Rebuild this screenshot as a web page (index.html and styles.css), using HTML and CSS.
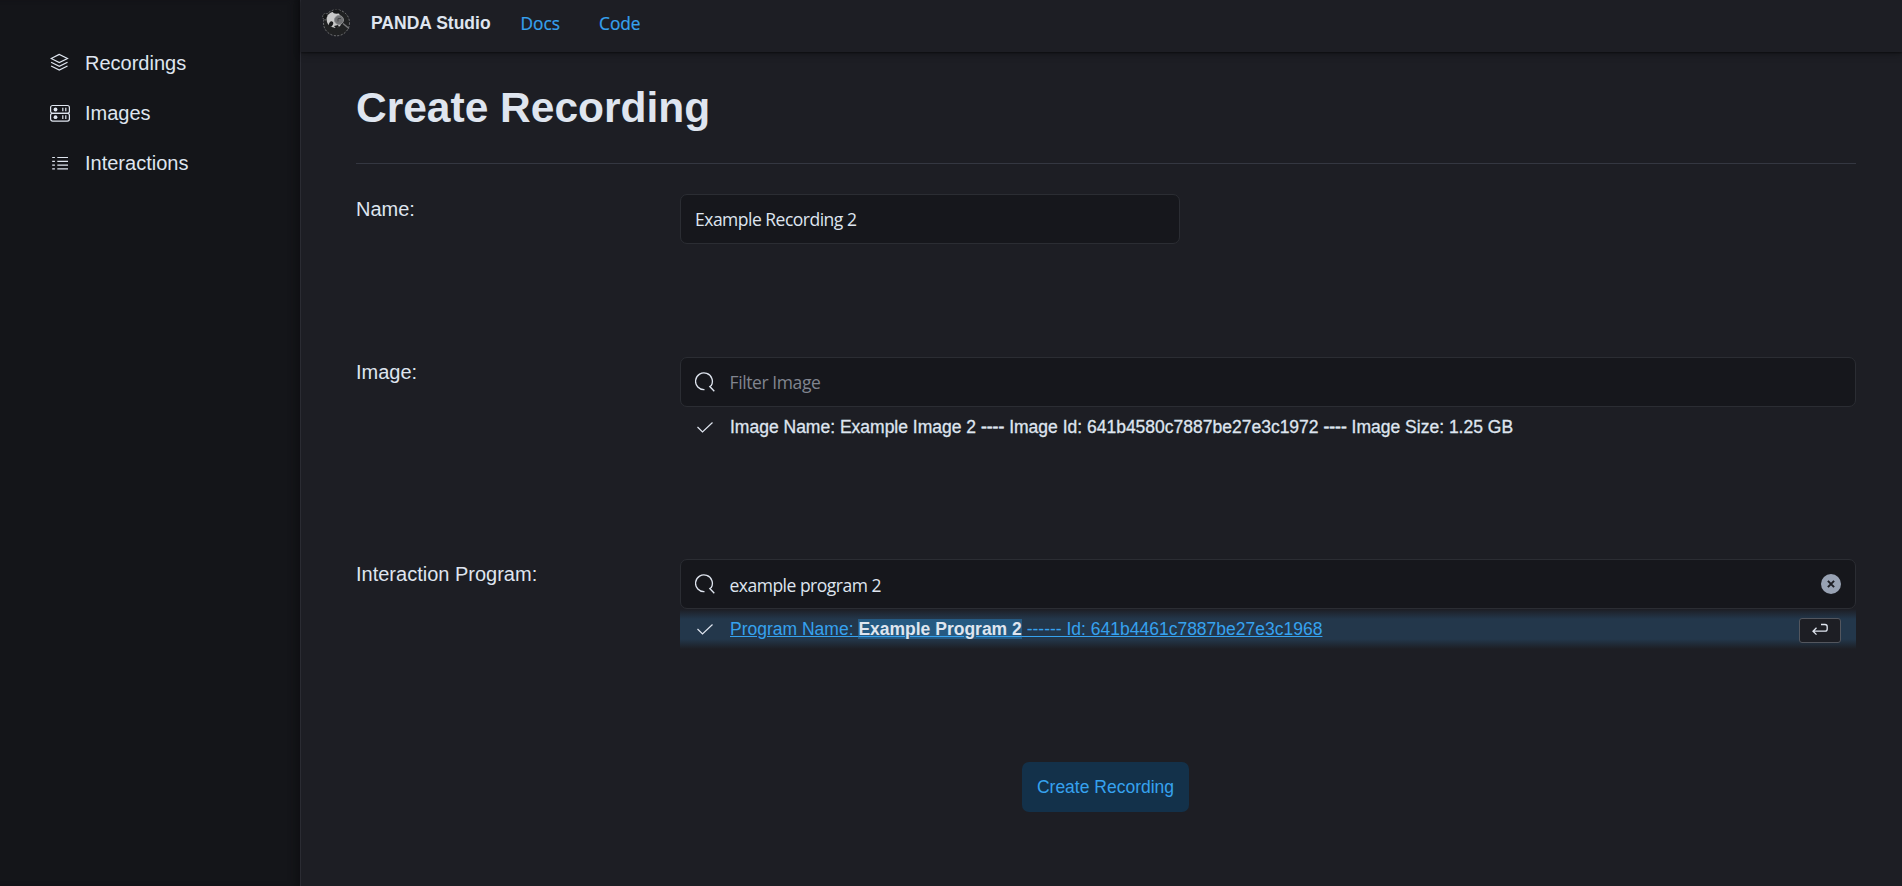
FILE: index.html
```html
<!DOCTYPE html>
<html lang="en">
<head>
<meta charset="utf-8">
<title>PANDA Studio</title>
<link rel="stylesheet" href="styles.css">
</head>
<body>
<div class="app">
  <nav class="sidebar">
    <a class="nav-item">
      <svg class="nav-icon" viewBox="0 0 20 20"><path d="M9.300 2.400 1.100 6.500 9.300 10.600l8.200-4.100zM1.100 10.300 9.300 14.400l8.200-4.100M1.100 14 9.300 18.100l8.200-4.100"/></svg>
      <span class="nav-text">Recordings</span>
    </a>
    <a class="nav-item">
      <svg class="nav-icon" viewBox="0 0 20 20"><rect x=".6" y="3.500" width="18.800" height="7.800" rx="2"/><rect x=".6" y="11.300" width="18.800" height="7.800" rx="2"/><circle class="dot" cx="5.500" cy="7.500" r="1.900"/><circle class="dot" cx="5.500" cy="15.200" r="1.900"/><path d="M12.800 5.700v3.600M15.800 5.700v3.600M12.800 13.300v3.600M15.800 13.300v3.600"/></svg>
      <span class="nav-text">Images</span>
    </a>
    <a class="nav-item">
      <svg class="nav-icon" viewBox="0 0 20 20"><path d="M2.200 5.500h2.700M7.300 5.500H18M2.200 9.300h2.700M7.300 9.300H18M2.200 13.100h2.700M7.300 13.100H18M2.200 16.900h2.700M7.300 16.900H18"/></svg>
      <span class="nav-text">Interactions</span>
    </a>
  </nav>
  <div class="main">
    <header class="header">
      <svg class="logo" viewBox="0 0 30 30">
        <circle cx="15.500" cy="14.800" r="13" fill="#202122" stroke="#77787a" stroke-width="1" stroke-dasharray="2 1.500"/>
        <path d="M5 12c-3 0-4-3-3-5s4-2 5 0z" fill="#151617" stroke="#77787a" stroke-width=".8" stroke-dasharray="1.500 1"/>
        <path d="M10 4.500c5-2 8 0 9 3l1 8c0 3-3 4-6 4.500-3-1-7-2-8-6-1-5 1-8 4-9.500z" fill="#c9c9c9"/>
        <ellipse cx="15.500" cy="3.600" rx="3.600" ry="2.200" fill="#151617"/>
        <ellipse cx="10" cy="16" rx="2" ry="2.800" fill="#1a1b1c" transform="rotate(25 10 16)"/>
        <path d="M13 18l4-1 1 2-3 1.500z" fill="#1a1b1c"/>
        <circle cx="18" cy="12" r="4.500" fill="#707173" stroke="#8b8c8e"/>
        <path d="M17 13.500v-3h3" fill="none" stroke="#444547"/>
        <path d="M22 15.500l6 5" stroke="#77787a" stroke-width="1.400"/>
      </svg>
      <span class="brand">PANDA Studio</span>
      <a class="header-link">Docs</a>
      <a class="header-link">Code</a>
    </header>
    <main class="content">
      <h1 class="title">Create Recording</h1>
      <div class="row row-name">
        <label class="label">Name:</label>
        <div class="field field-short"><span class="value">Example Recording 2</span></div>
      </div>
      <div class="row row-image">
        <label class="label">Image:</label>
        <div class="picker">
          <div class="field">
            <svg class="search" viewBox="0 0 20 20"><path d="M9.500 17.700A8.400 8.400 0 1 1 16.200 13.600L14.800 14.500 19.300 19.300"/></svg>
            <span class="value placeholder">Filter Image</span>
          </div>
          <div class="option">
            <svg class="check" viewBox="0 0 20 20"><path d="M2.500 10l5 5L17.500 5.500"/></svg>
            <span class="option-text image-text">Image Name: Example Image 2 <span class="dashes">----</span> Image Id: 641b4580c7887be27e3c1972 <span class="dashes">----</span> Image Size: 1.25 GB</span>
          </div>
        </div>
      </div>
      <div class="row row-program">
        <label class="label">Interaction Program:</label>
        <div class="picker">
          <div class="field">
            <svg class="search" viewBox="0 0 20 20"><path d="M9.500 17.700A8.400 8.400 0 1 1 16.200 13.600L14.800 14.500 19.300 19.300"/></svg>
            <span class="value value-typed">example program 2</span>
            <svg class="clear" viewBox="0 0 20 20"><circle cx="10" cy="10" r="10"/><path d="M6.900 6.900l6.200 6.200M13.100 6.900l-6.200 6.200"/></svg>
          </div>
          <div class="option option-active">
            <svg class="check" viewBox="0 0 20 20"><path d="M2.500 10l5 5L17.500 5.500"/></svg>
            <span class="option-text program-text">Program Name: <mark class="match">Example Program 2</mark> ------ Id: 641b4461c7887be27e3c1968</span>
            <span class="enter"><svg class="enter-icon" viewBox="0 0 16 16"><path d="M9 2.500h4Q15.200 2.500 15.200 4.700V7Q15.200 9.200 13 9.200H1.200M4.500 5.800 1 9.200l3.500 3.400"/></svg></span>
          </div>
        </div>
      </div>
      <button class="submit">Create Recording</button>
    </main>
  </div>
</div>
</body>
</html>
```
FILE: styles.css
```css
* { box-sizing: border-box; }
body {
  margin: 0;
  background: #1d1e24;
  color: #dfe5ef;
  font-family: "Liberation Sans", Arial, sans-serif;
  overflow: hidden;
}
.app { display: flex; height: 886px; }
.sidebar {
  width: 301px;
  flex: none;
  background: #141519;
  border-right: 1px solid #2b2c33;
  box-shadow: inset -8px 0 8px -5px #0e0f12;
  padding: 37px 0 0 50px;
}
.nav-item {
  display: flex;
  align-items: center;
  gap: 15px;
  height: 50px;
  font-size: 20px;
}
.nav-text { padding-top: 2px; }
.nav-icon {
  width: 20px;
  height: 20px;
  fill: none;
  stroke: #dfe5ef;
  stroke-width: 1.2;
}
.nav-icon .dot { fill: #dfe5ef; stroke: none; }
.main { flex: 1; min-width: 0; }
.header {
  display: flex;
  align-items: center;
  height: 52px;
  padding: 0 0 6px 20px;
  box-shadow: 0 1px 2px rgba(0, 0, 0, .5), 0 3px 8px rgba(0, 0, 0, .2);
}
.logo { width: 30px; height: 30px; }
.brand { font-size: 17.5px; font-weight: bold; margin-left: 20px; width: 149.5px; }
.header-link {
  font-family: "Open Sans", sans-serif;
  font-weight: 500;
  font-size: 17.3px;
  color: #36a2ef;
  -webkit-text-stroke: .2px #36a2ef;
  width: 78.5px;
  white-space: nowrap;
}
.content { padding: 26px 46px 0 55px; }
.title {
  margin: 0 0 30px;
  height: 86px;
  padding-top: 1px;
  border-bottom: 1px solid #343741;
  font-size: 42.5px;
  line-height: 58px;
}
.row { display: grid; grid-template-columns: 324px 1fr; }
.row-name { height: 163px; }
.row-image { height: 202px; }
.row-program { height: 203px; }
.label { font-size: 20px; line-height: 30px; }
.field {
  display: flex;
  align-items: center;
  height: 50px;
  padding: 0 14px;
  background: #16171c;
  border: 1px solid #2b2d33;
  border-radius: 7px;
}
.field-short { width: 500px; }
.value {
  font-family: "Open Sans", sans-serif;
  font-size: 17.5px;
  letter-spacing: -.5px;
  white-space: nowrap;
}
.value-typed { padding-top: 2px; }
.placeholder { color: #81858f; letter-spacing: -.4px; }
.search {
  width: 20px;
  height: 20px;
  margin-right: 14.5px;
  fill: none;
  stroke: #dfe5ef;
  stroke-width: 1.3;
}
.clear { width: 20px; height: 20px; margin-left: auto; fill: #98a2b3; }
.clear path { stroke: #1d1e24; stroke-width: 2; }
.option {
  display: flex;
  align-items: center;
  height: 40px;
  padding: 0 15px;
  font-size: 17.5px;
}
.option-active {
  background: linear-gradient(#1d1e24, #23374b 25%, #23374b 75%, #1d1e24);
}
.check {
  width: 20px;
  height: 20px;
  margin-right: 15px;
  fill: none;
  stroke: #dfe5ef;
  stroke-width: 1.2;
}
.option-text { white-space: nowrap; }
.image-text { -webkit-text-stroke: .3px #dfe5ef; }
.dashes { -webkit-text-stroke: .6px currentColor; }
.program-text { color: #36a2ef; text-decoration: underline; }
.match { background: #265a82; color: #dfe5ef; font-weight: bold; }
.enter {
  display: flex;
  align-items: center;
  justify-content: center;
  width: 42px;
  height: 25px;
  margin: 2px 0 0 auto;
  background: #1d1e24;
  border: 1px solid #53565e;
  border-radius: 3px;
}
.enter-icon { width: 16px; height: 16px; fill: none; stroke: #dfe5ef; stroke-width: 1.3; }
.submit {
  display: block;
  width: 167px;
  height: 50px;
  margin: 0 0 0 666px;
  padding: 0;
  border: 0;
  border-radius: 7px;
  background: #13314a;
  color: #36a2ef;
  font-family: inherit;
  font-size: 17.5px;
}
```
